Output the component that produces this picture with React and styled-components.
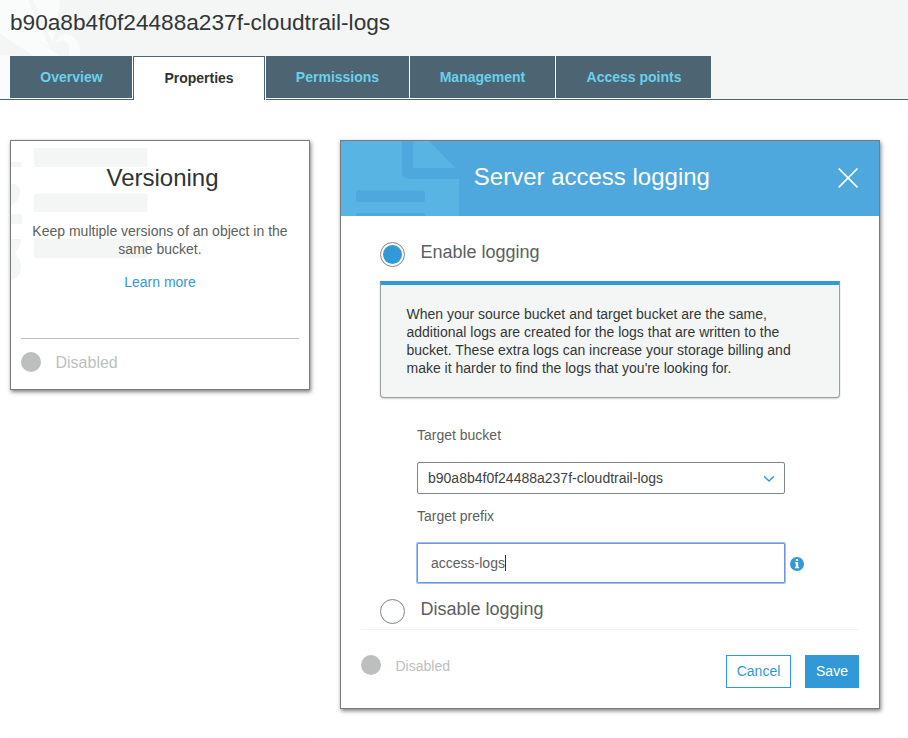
import React from "react";
import styled, { createGlobalStyle } from "styled-components";

const GlobalStyle = createGlobalStyle`
  *, *::before, *::after { box-sizing: border-box; }
  body {
    margin: 0;
    background: #fff;
    color: #5c6060;
    font-family: "Liberation Sans", Arial, sans-serif;
    font-size: 14px;
    line-height: 18px;
  }
`;

const Page = styled.div`
  width: 908px;
  height: 738px;
  overflow: hidden;
`;

const Header = styled.header`
  position: relative;
  z-index: 0;
  height: 100px;
  padding: 0 10px;
  display: flex;
  flex-direction: column;
  background: #f4f6f6;
  border-bottom: 1px solid #4d6472;
`;

const HeaderArt = styled.svg`
  position: absolute;
  left: 0;
  top: 0;
  z-index: -1;
`;

const BucketName = styled.h1`
  flex-shrink: 0;
  margin: 0;
  height: 56px;
  padding-top: 9px;
  font-size: 22.65px;
  line-height: 27px;
  font-weight: 400;
  color: #333636;
`;

const Tabs = styled.nav`
  display: flex;
  align-items: flex-start;
`;

const Tab = styled.a`
  width: ${(p) => p.$width}px;
  height: ${(p) => (p.$active ? 44 : 43)}px;
  padding-top: 12px;
  padding-left: ${(p) => p.$nudge || 0}px;
  text-align: center;
  font-weight: 700;
  color: ${(p) => (p.$active ? "#303333" : "#69d0ed")};
  background: ${(p) => (p.$active ? "#fff" : "#4d6472")};
  border-style: solid;
  border-color: ${(p) => (p.$active ? "#4d6472" : "#fff")};
  border-width: ${(p) => (p.$active ? "1px 1px 0" : "0 0 1px")};
  margin-right: ${(p) => (p.$last ? 0 : 1)}px;
  box-shadow: ${(p) => (p.$last ? "none" : "1px 0 0 #fff")};
`;

const Cards = styled.main`
  display: grid;
  grid-template-columns: 300px 540px 300px;
  grid-template-rows: 569px 250px;
  gap: 31px 30px;
  align-items: start;
  padding: 40px 10px 0;
`;

const Panel = styled.section`
  position: relative;
  z-index: 0;
  display: flex;
  flex-direction: column;
  height: ${(p) => p.$height}px;
  background: #fff;
  border: 1px solid #797b7b;
  box-shadow: 1px 2px 4px rgba(0, 0, 0, 0.5);
`;

const IdlePanel = styled.section`
  height: 250px;
  background: #fff;
  box-shadow: 0 0 4px rgba(0, 0, 0, 0.16);
`;

const PanelArt = styled.svg`
  position: absolute;
  left: 0;
  top: 0;
  z-index: -1;
`;

const CardBody = styled.div`
  flex: 1;
  padding: 22px 18px 0;
  text-align: center;
`;

const CardTitle = styled.h2`
  margin: 0 0 30px;
  padding-left: 5px;
  font-size: 24px;
  line-height: 29px;
  font-weight: 400;
  color: #303333;
`;

const CardText = styled.p`
  margin: 0 0 15px;
`;

const Link = styled.a`
  color: #3199d8;
`;

const CardStatus = styled.div`
  display: flex;
  height: 51px;
  margin: 0 10px;
  padding-top: 13px;
  border-top: 1px solid #bcbebe;
`;

const Dot = styled.span`
  width: 20px;
  height: 20px;
  border-radius: 50%;
  background: #bcbfbe;
`;

const StatusText = styled.span`
  margin-left: 14.5px;
  padding-top: ${(p) => p.$offset}px;
  font-size: ${(p) => p.$size}px;
  line-height: 18px;
  color: #bcbfbe;
`;

const DialogHeader = styled.div`
  display: flex;
  justify-content: space-between;
  height: 75px;
  padding: 21px 20px 0 132.8px;
  position: relative;
  z-index: 0;
  background: #4ea8dd;
`;

const DialogTitle = styled.h2`
  margin: 0;
  font-size: 24px;
  line-height: 29px;
  font-weight: 400;
  color: #fff;
`;

const CloseIcon = styled.svg`
  width: 22px;
  height: 22px;
  margin-top: 5px;
`;

const DialogBody = styled.div`
  height: 414px;
  margin: 0 20px;
  padding: 26px 18px 0 19px;
  border-bottom: 1px solid #f2f4f4;
`;

const RadioRow = styled.label`
  display: flex;
  height: 25px;
  font-size: 18px;
  line-height: 20px;
`;

const Radio = styled.span`
  width: 25px;
  height: 25px;
  margin-right: 15.5px;
  padding: 2px;
  border: 1px solid #7f8685;
  border-radius: 50%;

  &::before {
    content: "";
    display: ${(p) => (p.$on ? "block" : "none")};
    width: 19px;
    height: 19px;
    border-radius: 50%;
    background: #3199d8;
  }
`;

const Notice = styled.div`
  width: 460px;
  height: 117px;
  margin-top: 14px;
  padding: 20px 25.5px 0;
  color: #333636;
  background: #f4f6f6;
  border: 1px solid #9b9f9f;
  border-top: 4px solid #3199d8;
  border-radius: 0 0 4px 4px;
  box-shadow: 0 1px 2px rgba(0, 0, 0, 0.2);
`;

const Fields = styled.div`
  width: 400px;
  margin: 28px 0 16px 37px;
`;

const FieldLabel = styled.div`
  height: 18px;
  margin-bottom: 18px;
`;

const Select = styled.div`
  display: flex;
  align-items: center;
  justify-content: space-between;
  width: 368px;
  height: 32px;
  margin-bottom: 13px;
  padding: 0 9px 0 10px;
  color: #3e4242;
  border: 1px solid #7f8685;
  border-radius: 2px;
`;

const Chevron = styled.svg`
  width: 12px;
  height: 8px;
  margin-top: 2px;
`;

const InputRow = styled.div`
  display: flex;
  align-items: center;
`;

const TextInput = styled.div`
  display: flex;
  align-items: center;
  width: 368px;
  height: 40px;
  padding-left: 13px;
  margin-right: 5px;
  border: 1px solid #6d96dc;
  border-radius: 1px;
  box-shadow: 0 0 0 1px #a0c0f5;
`;

const Caret = styled.span`
  width: 1px;
  height: 16px;
  background: #303333;
`;

const InfoIcon = styled.svg`
  width: 14px;
  height: 14px;
  margin-top: 2px;
`;

const DialogFooter = styled.div`
  display: flex;
  padding: 25px 20px 0;
`;

const Button = styled.button`
  width: ${(p) => p.$width}px;
  height: 33px;
  padding: 0 0 2px;
  font: inherit;
  border: 1px solid #3199d8;
  color: ${(p) => (p.$primary ? "#fff" : "#3199d8")};
  background: ${(p) => (p.$primary ? "#3199d8" : "#fff")};
`;

const Actions = styled.div`
  display: flex;
  gap: 14px;
  margin-left: auto;
`;

const tabs = [
  { label: "Overview", width: 122, nudge: 1 },
  { label: "Properties", width: 132, active: true },
  { label: "Permissions", width: 143 },
  { label: "Management", width: 145 },
  { label: "Access points", width: 155, nudge: 1 },
];

function VersioningCard() {
  return (
    <Panel $height={250}>
      <PanelArt width="150" height="145" fill="#f4f6f6">
        <rect x="23" y="7" width="113.500" height="19" rx="2" />
        <rect x="23" y="52.500" width="113.500" height="18.500" rx="2" />
        <rect x="23" y="98" width="113.500" height="19" rx="2" />
        <rect x="0" y="21" width="11" height="5" />
        <path d="M0 43 H4 Q10 46 9 53 Q8 60 0 65 Z" />
        <rect x="0" y="73" width="11" height="10" />
        <path d="M0 98 H10 V102 L4 113 Q11 118 10 128 Q9 137 0 139 Z" />
      </PanelArt>
      <CardBody>
        <CardTitle>Versioning</CardTitle>
        <CardText>Keep multiple versions of an object in the same bucket.</CardText>
        <Link>Learn more</Link>
      </CardBody>
      <CardStatus>
        <Dot />
        <StatusText $size={16} $offset={2}>Disabled</StatusText>
      </CardStatus>
    </Panel>
  );
}

function LoggingDialog() {
  return (
    <Panel $height={569}>
      <DialogHeader>
        <PanelArt width="120" height="75">
          <path d="M0 0 H61 V31 Q61 38 68 38 H118 V75 H0 Z" fill="#58b4e3" />
          <path d="M72 0 H88 L114.500 27 H72 Z" fill="#58b4e3" />
          <rect x="15" y="49.500" width="69" height="11.500" rx="2.500" fill="#4ea8dd" />
          <rect x="15" y="72" width="69" height="10" rx="2.500" fill="#4ea8dd" />
        </PanelArt>
        <DialogTitle>Server access logging</DialogTitle>
        <CloseIcon viewBox="0 0 22 22" stroke="#fff" strokeWidth="1.700">
          <path d="M1.700 1.500 20.500 20.300 M20.500 1.500 1.700 20.300" />
        </CloseIcon>
      </DialogHeader>
      <DialogBody>
        <RadioRow>
          <Radio $on />
          Enable logging
        </RadioRow>
        <Notice>
          When your source bucket and target bucket are the same, additional logs are created for
          the logs that are written to the bucket. These extra logs can increase your storage
          billing and make it harder to find the logs that you're looking for.
        </Notice>
        <Fields>
          <FieldLabel>Target bucket</FieldLabel>
          <Select>
            b90a8b4f0f24488a237f-cloudtrail-logs
            <Chevron viewBox="0 0 12 8" fill="none" stroke="#3199d8" strokeWidth="1.500">
              <path d="M1 1.200 6 6 11 1.200" />
            </Chevron>
          </Select>
          <FieldLabel>Target prefix</FieldLabel>
          <InputRow>
            <TextInput>
              access-logs
              <Caret />
            </TextInput>
            <InfoIcon viewBox="0 0 14 14">
              <circle cx="7" cy="7" r="7" fill="#3199d8" />
              <path d="M5.900 2 H8.100 V4 H5.900 Z M5 5 H8.200 V9.800 H9.100 V11.200 H4.900 V9.800 H5.900 V6.400 H5 Z" fill="#fff" />
            </InfoIcon>
          </InputRow>
        </Fields>
        <RadioRow>
          <Radio />
          Disable logging
        </RadioRow>
      </DialogBody>
      <DialogFooter>
        <Dot />
        <StatusText $size={14} $offset={2}>Disabled</StatusText>
        <Actions>
          <Button $width={65}>Cancel</Button>
          <Button $width={54} $primary>Save</Button>
        </Actions>
      </DialogFooter>
    </Panel>
  );
}

export default function App() {
  return (
    <Page>
      <GlobalStyle />
      <Header>
        <HeaderArt width="90" height="99">
          <path d="M0 0 H60 Q58 22 51 48 L60 36 Q66 32 72 36 Q82 43 80 57 V99 H0 Z" fill="#fafcfb" />
          <path d="M0 34 L34 56 H20 L0 55 Z M13 22 L50 48 L28 0 H33 L53 44 L64 40 Q71 44 69 57 H61 Z" fill="#f4f6f6" />
        </HeaderArt>
        <BucketName>b90a8b4f0f24488a237f-cloudtrail-logs</BucketName>
        <Tabs>
          {tabs.map((tab, i) => (
            <Tab
              key={tab.label}
              $width={tab.width}
              $active={tab.active}
              $nudge={tab.nudge}
              $last={i === tabs.length - 1}
            >
              {tab.label}
            </Tab>
          ))}
        </Tabs>
      </Header>
      <Cards>
        <VersioningCard />
        <LoggingDialog />
        <IdlePanel />
        <IdlePanel />
      </Cards>
    </Page>
  );
}
